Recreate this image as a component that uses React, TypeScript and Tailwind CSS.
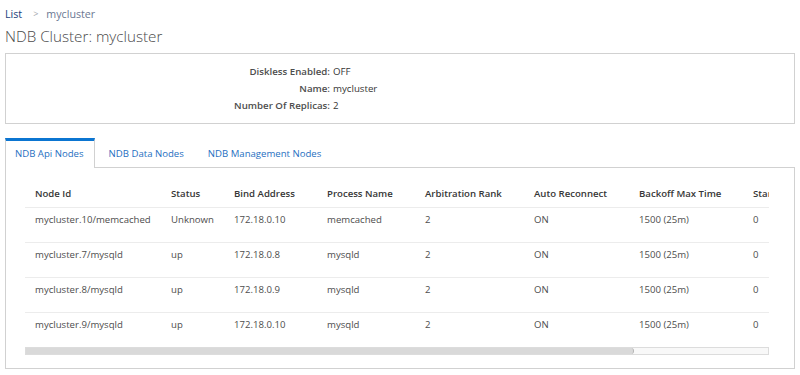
import React from "react";

const columns = [
  { label: "Node Id", w: "w-[136px]" },
  { label: "Status", w: "w-[63px]" },
  { label: "Bind Address", w: "w-[93px]" },
  { label: "Process Name", w: "w-[98px]" },
  { label: "Arbitration Rank", w: "w-[109px]" },
  { label: "Auto Reconnect", w: "w-[105px]" },
  { label: "Backoff Max Time", w: "w-[114px]" },
  { label: "Start Connect Backoff Max Time", w: "w-[187px]" },
];

const rows = [
  ["mycluster.10/memcached", "Unknown", "172.18.0.10", "memcached", "2", "ON", "1500 (25m)", "0"],
  ["mycluster.7/mysqld", "up", "172.18.0.8", "mysqld", "2", "ON", "1500 (25m)", "0"],
  ["mycluster.8/mysqld", "up", "172.18.0.9", "mysqld", "2", "ON", "1500 (25m)", "0"],
  ["mycluster.9/mysqld", "up", "172.18.0.10", "mysqld", "2", "ON", "1500 (25m)", "0"],
];

const details = [
  ["Diskless Enabled:", "OFF"],
  ["Name:", "mycluster"],
  ["Number Of Replicas:", "2"],
];

export default function App() {
  return (
    <div className="min-h-[375px] bg-white px-[5px] font-['Open_Sans',sans-serif] text-[#363636]">
      {/* Breadcrumb */}
      <div className="flex items-center pt-[6px] text-[10.7px] leading-[16px]">
        <a href="#" className="text-[#22417c]">List</a>
        <span className="ml-[11px] text-[9px] text-[#a0a6ad]">&gt;</span>
        <span className="ml-[8px] text-[#6b7893]">mycluster</span>
      </div>
      <h1 className="mt-[3px] text-[15.2px] font-light leading-[22px] text-[#4a4a4a]">NDB Cluster: mycluster</h1>

      {/* Details */}
      <div className="mt-[6px] border border-[#d1d1d1] pt-[9px] pb-[9px]">
        <div className="grid grid-cols-[324px_1fr] gap-x-[3px] text-[9.7px] leading-[17px]">
          {details.map(([k, v]) => (
            <React.Fragment key={k}>
              <div className="text-right font-semibold text-[#4d4d4d]">{k}</div>
              <div className="text-[#363636]">{v}</div>
            </React.Fragment>
          ))}
        </div>
      </div>

      {/* Tabs */}
      <div className="mt-[14px] flex text-[9.6px] leading-[14px] text-[#1f6fbf]">
        <div className="relative z-10 -mb-px border-x border-t-[3px] border-[#d1d1d1] border-t-[#0b75d1] bg-white pl-[9px] pr-[10px] pt-[6px] pb-[6px]">
          NDB Api Nodes
        </div>
        <div className="pl-[14px] pr-[12px] pt-[9px] pb-[6px]">NDB Data Nodes</div>
        <div className="pl-[12px] pr-[10px] pt-[9px] pb-[6px]">NDB Management Nodes</div>
      </div>

      {/* Panel */}
      <div className="border border-[#d1d1d1] pt-[13px] pb-[13px] pl-[19px] pr-[25px]">
        <div className="overflow-hidden">
          <table className="w-[905px] table-fixed border-collapse text-left text-[9.6px]">
            <thead>
              <tr className="border-b border-[#ececec]">
                {columns.map((c) => (
                  <th key={c.label} className={`${c.w} h-[26px] whitespace-nowrap px-[10px] align-middle font-semibold text-[#363636]`}>
                    {c.label}
                  </th>
                ))}
              </tr>
            </thead>
            <tbody>
              {rows.map((r, i) => (
                <tr key={i} className="border-b border-[#ececec] last:border-b-0">
                  {r.map((cell, j) => (
                    <td key={j} className="h-[35px] whitespace-nowrap px-[10px] pb-[13px] pt-[5px] align-top text-[#4d4d4d]">
                      {cell}
                    </td>
                  ))}
                </tr>
              ))}
            </tbody>
          </table>
        </div>
        {/* Scrollbar */}
        <div className="h-[8px] border border-[#dcdcdc] bg-[#f8f8f8]">
          <div className="h-full w-[608px] rounded-r-[3px] border-r border-[#b5b5b5] bg-[#d9d9d9]" />
        </div>
      </div>
    </div>
  );
}
